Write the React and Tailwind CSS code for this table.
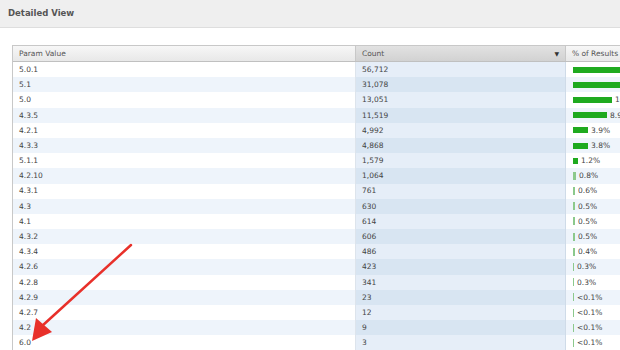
import React from "react";

const rows = [
  ["5.0.1", "56,712", 44.0, ""],
  ["5.1", "31,078", 24.1, ""],
  ["5.0", "13,051", 10.1, "10.1%"],
  ["4.3.5", "11,519", 8.9, "8.9%"],
  ["4.2.1", "4,992", 3.9, "3.9%"],
  ["4.3.3", "4,868", 3.8, "3.8%"],
  ["5.1.1", "1,579", 1.2, "1.2%"],
  ["4.2.10", "1,064", 0.8, "0.8%"],
  ["4.3.1", "761", 0.6, "0.6%"],
  ["4.3", "630", 0.5, "0.5%"],
  ["4.1", "614", 0.5, "0.5%"],
  ["4.3.2", "606", 0.5, "0.5%"],
  ["4.3.4", "486", 0.4, "0.4%"],
  ["4.2.6", "423", 0.3, "0.3%"],
  ["4.2.8", "341", 0.3, "0.3%"],
  ["4.2.9", "23", 0, "<0.1%"],
  ["4.2.7", "12", 0, "<0.1%"],
  ["4.2", "9", 0, "<0.1%"],
  ["6.0", "3", 0, "<0.1%"],
];

export default function App() {
  return (
    <div
      className="relative w-[620px] h-[350px] overflow-hidden bg-white text-[#444]"
      style={{ fontFamily: '"DejaVu Sans", Verdana, sans-serif' }}
    >
      <div className="h-[28px] bg-[#efefef] border-b border-[#dedede] flex items-center pl-[8px]">
        <span className="text-[8.5px] font-bold text-[#555]">Detailed View</span>
      </div>
      <div className="pt-[17px] pl-[12px]">
        <div className="border-l border-t border-[#c8c8c8]">
          <div className="grid grid-cols-[343px_210px_60px] h-[16px] text-[7.5px] text-[#555] border-b border-[#c0c0c0]">
            <div className="bg-gradient-to-b from-[#f7f7f7] to-[#e8e8e8] flex items-center pl-[6px] border-r border-[#c8c8c8]">
              Param Value
            </div>
            <div className="bg-gradient-to-b from-[#e2e2e2] to-[#d2d2d2] flex items-center justify-between pl-[6px] pr-[6px] border-r border-[#c8c8c8]">
              <span>Count</span>
              <span className="text-[6px] text-[#333]">▼</span>
            </div>
            <div className="bg-gradient-to-b from-[#f7f7f7] to-[#e8e8e8] flex items-center pl-[6px] whitespace-nowrap">
              % of Results
            </div>
          </div>
          {rows.map(([p, c, pct, label], i) => {
            const odd = i % 2 === 1;
            const w = pct > 0 ? Math.max(1, Math.round(pct * 3.85)) : 1;
            return (
              <div
                key={p}
                className={`grid grid-cols-[343px_210px_60px] h-[15.2px] text-[7.5px] text-[#444] ${
                  odd ? "bg-[#eef4fb]" : "bg-white"
                }`}
              >
                <div className="flex items-center pl-[6px] border-r border-[#dde4ec]">{p}</div>
                <div
                  className={`flex items-center pl-[6px] border-r border-[#cfdbe8] ${
                    odd ? "bg-[#d8e5f2]" : "bg-[#e6eef8]"
                  }`}
                >
                  {c}
                </div>
                <div className="flex items-center pl-[7px] whitespace-nowrap">
                  <div
                    className={`shrink-0 ${pct >= 1 ? "h-[6px]" : "h-[8px]"} ${
                      pct >= 1 ? "bg-[#1faa1f]" : "bg-[#8cc98c]"
                    }`}
                    style={{ width: w + "px" }}
                  />
                  {label && <span className="ml-[3px]">{label}</span>}
                </div>
              </div>
            );
          })}
        </div>
      </div>
      <svg
        className="absolute left-0 top-0 pointer-events-none"
        width="620"
        height="350"
        viewBox="0 0 620 350"
      >
        <line x1="131" y1="245" x2="42" y2="326" stroke="#e8302a" strokeWidth="2.5" strokeLinecap="round" />
        <polygon points="32,341 36,318 52,332" fill="#e8302a" />
      </svg>
    </div>
  );
}
